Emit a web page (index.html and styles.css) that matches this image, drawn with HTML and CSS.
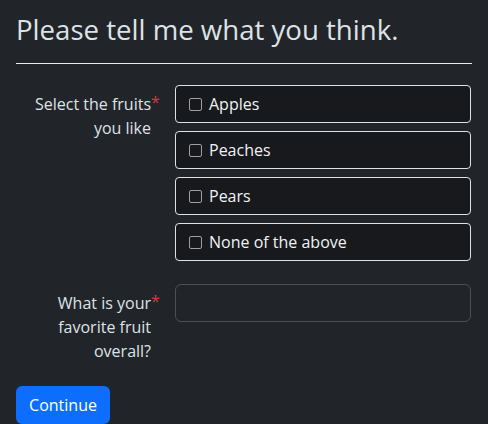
FILE: index.html
```html
<!DOCTYPE html>
<html>
<head>
<meta charset="utf-8">
<link rel="stylesheet" href="styles.css">
</head>
<body>
<div class="page">
  <h1 class="title">Please tell me what you think.</h1>
  <hr class="rule">
  <form class="form">
    <div class="row">
      <div class="label">Select the fruits<span class="req">*</span><br>you like</div>
      <div class="options">
        <label class="option"><span class="box"></span>Apples</label>
        <label class="option"><span class="box"></span>Peaches</label>
        <label class="option"><span class="box"></span>Pears</label>
        <label class="option"><span class="box"></span>None of the above</label>
      </div>
    </div>
    <div class="row row-text">
      <div class="label">What is your<span class="req">*</span><br>favorite fruit<br>overall?</div>
      <div class="field"><div class="input"></div></div>
    </div>
    <button type="button" class="btn">Continue</button>
  </form>
</div>
</body>
</html>
```
FILE: styles.css
```css
html, body {
  margin: 0;
  padding: 0;
  background: #212529;
}
body {
  font-family: "Open Sans", "Noto Sans", sans-serif;
  color: #dee2e6;
  font-size: 16px;
  line-height: 1.5;
}
.page {
  padding: 12px 16px 0 16px;
}
.title {
  margin: 0;
  font-size: 27.6px;
  font-weight: 400;
  line-height: 34px;
  color: #dee2e6;
}
.rule {
  margin: 17px 0 21px 0;
  border: 0;
  border-top: 1px solid #e9ecef;
}
.row {
  display: grid;
  grid-template-columns: 141px 296px;
  column-gap: 18px;
}
.label {
  text-align: right;
  padding-top: 7px;
  font-size: 16px;
  line-height: 24px;
  position: relative;
  padding-right: 6px;
}
.req {
  color: #dc3545;
  position: absolute;
  margin-top: -2px;
}
.options {
  display: flex;
  flex-direction: column;
  gap: 8px;
}
.option {
  display: flex;
  align-items: center;
  height: 38px;
  box-sizing: border-box;
  border: 1px solid #dee2e6;
  border-radius: 4px;
  background: #17191c;
  padding-left: 13px;
  color: #f0f2f4;
  font-size: 16px;
}
.box {
  width: 11px;
  height: 11px;
  border: 1.5px solid #9aa0a6;
  border-radius: 2px;
  margin-right: 7px;
  box-sizing: content-box;
}
.row-text {
  margin-top: 23px;
}
.input {
  height: 38px;
  box-sizing: border-box;
  border: 1px solid #495057;
  border-radius: 6px;
}
.btn {
  margin-top: 23px;
  display: block;
  background: #0d6efd;
  color: #fff;
  border: 0;
  border-radius: 6px;
  font-family: inherit;
  font-size: 16px;
  line-height: 24px;
  padding: 7px 12px;
  width: 94px;
  height: 38px;
}
```
